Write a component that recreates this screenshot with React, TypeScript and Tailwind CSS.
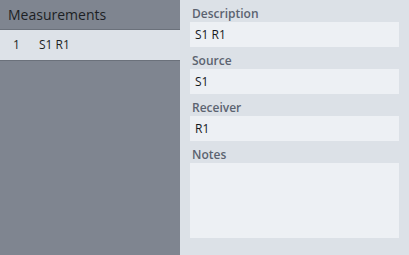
const fields = [
    { label: "Description", value: "S1 R1" },
    { label: "Source", value: "S1" },
    { label: "Receiver", value: "R1" },
];

function App() {
    return (
        <div className="flex h-[255px] w-[409px] font-['Open_Sans',sans-serif]">
            <div className="w-[180px] bg-[#7f8590] flex flex-col">
                <div className="h-[30px] border-b border-[#6b717b] pl-2 flex items-center text-[14px] text-[#1c1f24]">
                    Measurements
                </div>
                <div className="h-[31px] border-b border-[#6b717b] bg-[#dde2e8] flex items-center text-[12px] text-[#1c1f24]">
                    <span className="w-[39px] pl-[13px]">1</span>
                    <span>S1 R1</span>
                </div>
            </div>
            <div className="flex-1 bg-[#dce1e7] pl-[10px] pr-[10px] pt-[4px] flex flex-col">
                {fields.map((f) => (
                    <div key={f.label} className="flex flex-col">
                        <div className="h-[18px] pl-[2px] pt-[1px] text-[12px] font-semibold text-[#5b6370] leading-[18px]">{f.label}</div>
                        <div className="h-[25px] bg-[#edf0f4] pl-[5px] flex items-center text-[12px] text-[#15181d] mb-[4px]">
                            {f.value}
                        </div>
                    </div>
                ))}
                <div className="h-[18px] pl-[2px] pt-[1px] text-[12px] font-semibold text-[#5b6370] leading-[18px]">Notes</div>
                <textarea className="h-[75px] bg-[#edf0f4] resize-none outline-none" />
            </div>
        </div>
    );
}

export default App;
